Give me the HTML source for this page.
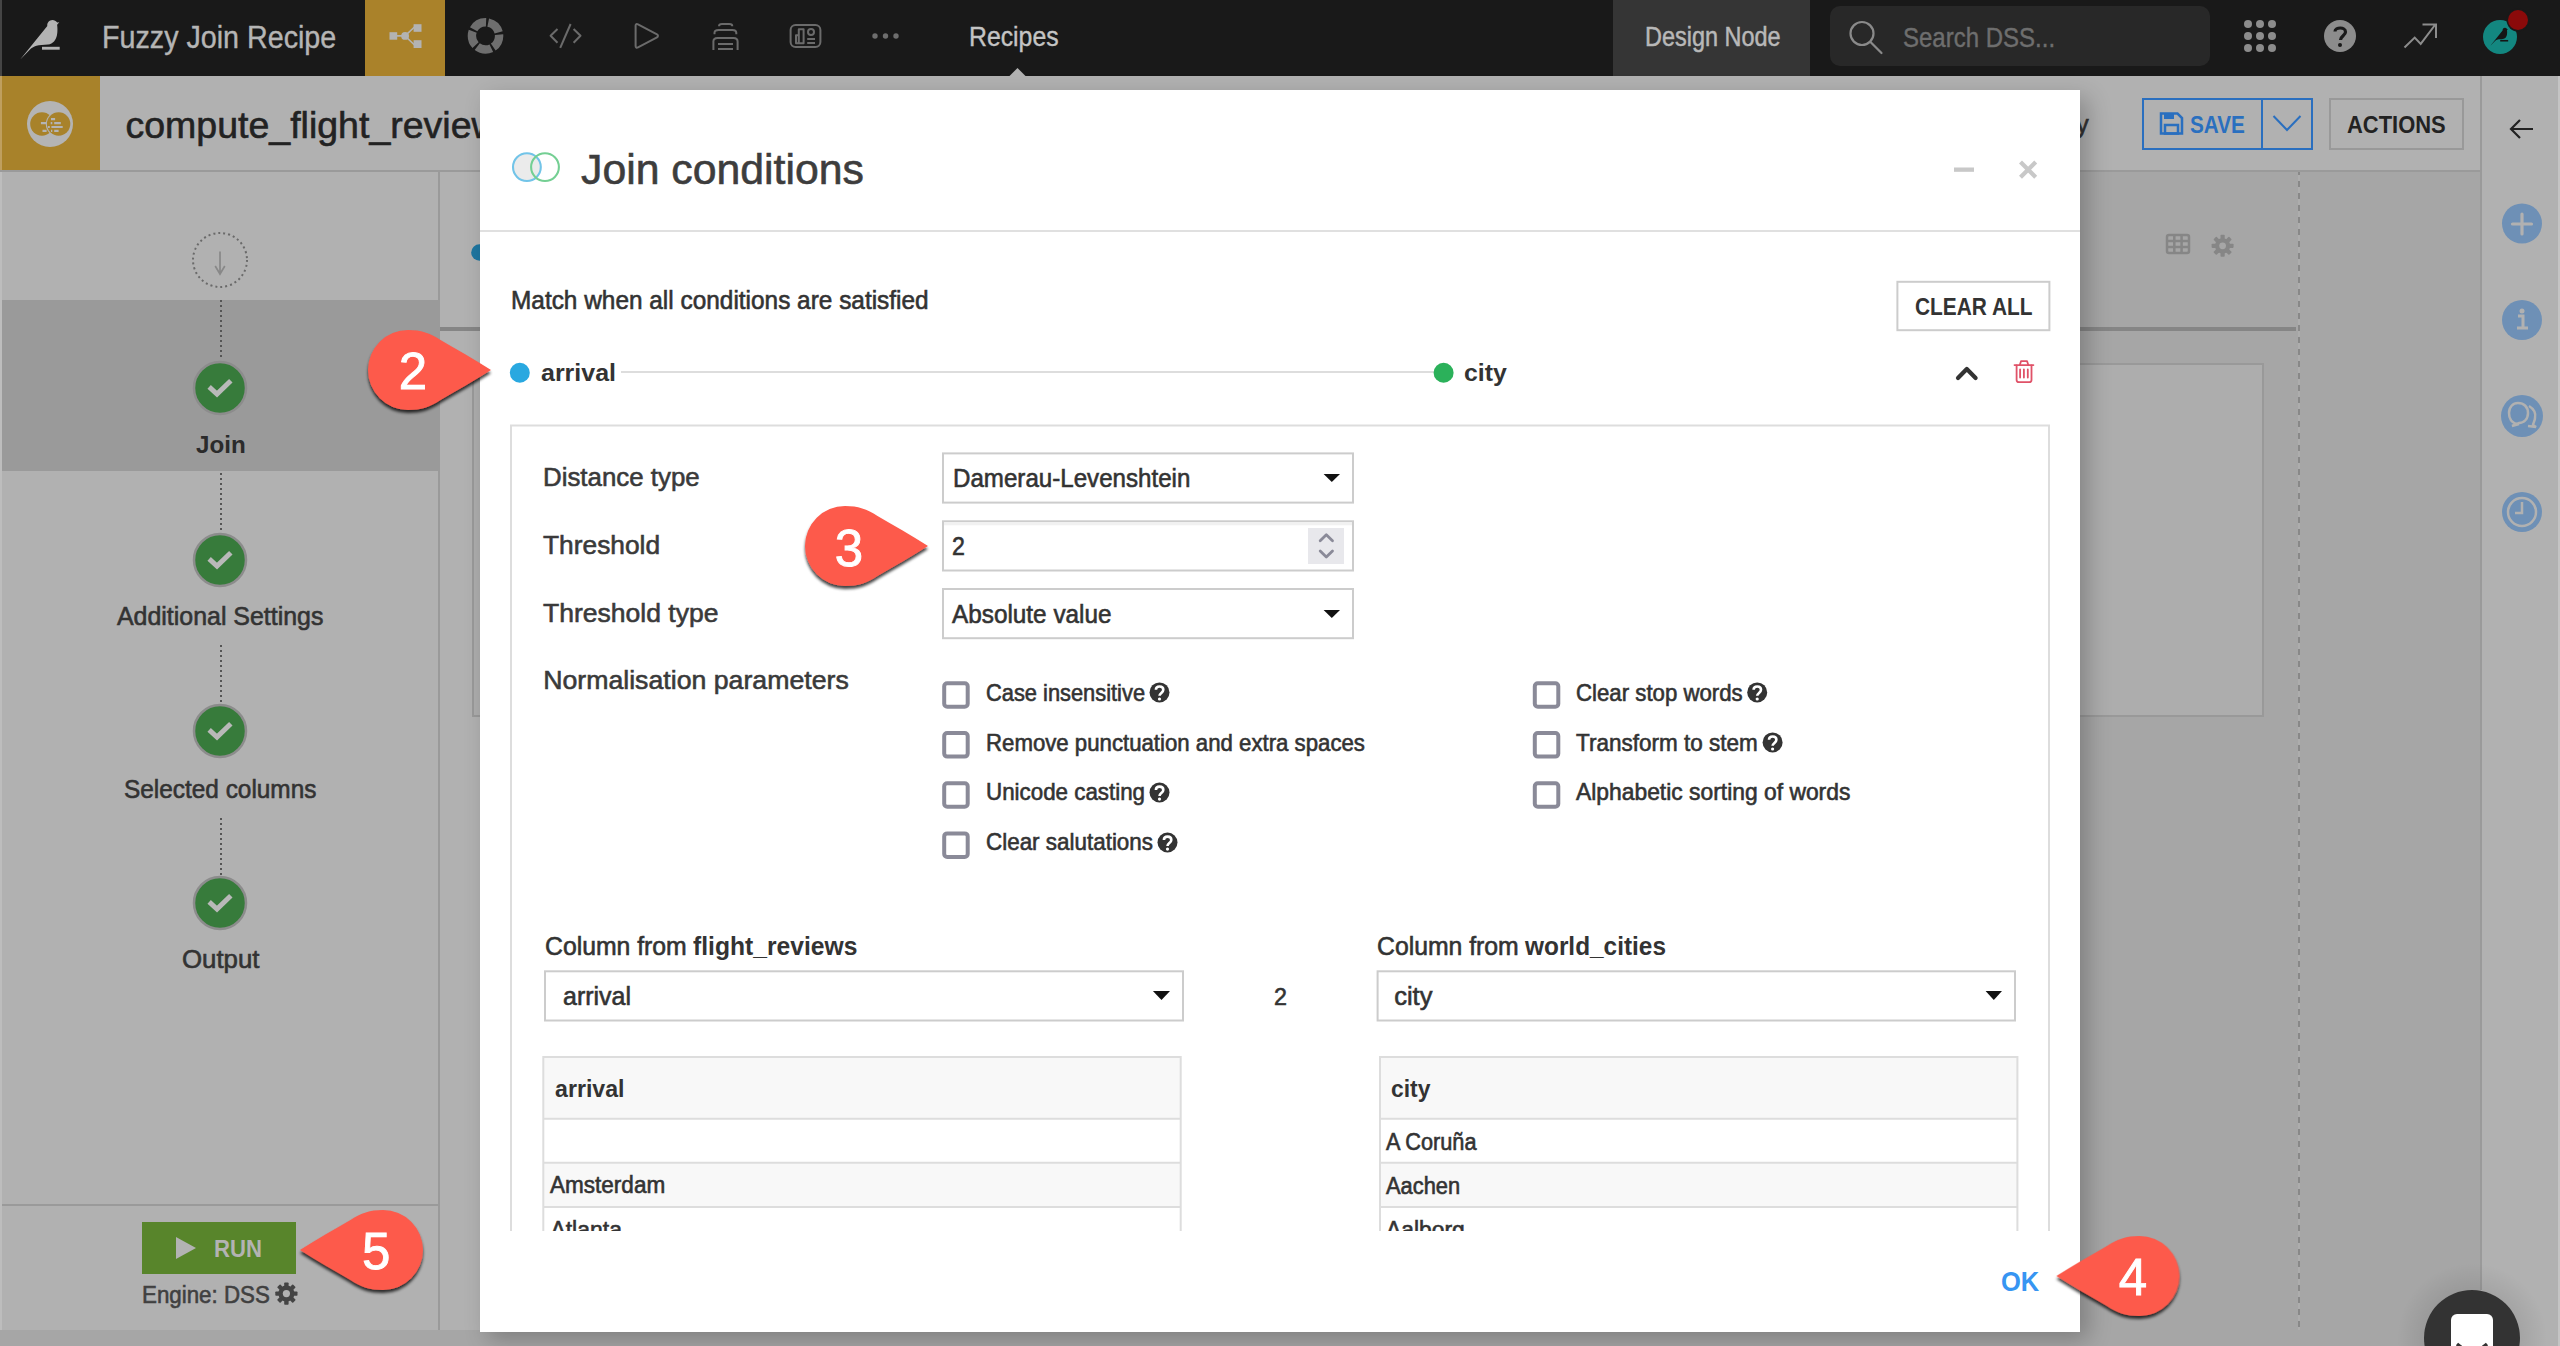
<!DOCTYPE html>
<html><head><meta charset="utf-8"><title>Join conditions</title>
<style>
html,body{margin:0;padding:0;}
body{width:2560px;height:1346px;overflow:hidden;position:relative;background:#a6a6a6;font-family:"Liberation Sans",sans-serif;}
.a{position:absolute;box-sizing:border-box;}
.tx{position:absolute;white-space:nowrap;line-height:1;transform-origin:0 0;font-family:"Liberation Sans",sans-serif;}
svg{position:absolute;overflow:visible;}
#nav{left:0;top:0;width:2560px;height:76px;background:#191919;}
.badge{position:absolute;}

</style></head><body>
<!-- ============ NAV ============ -->
<div id="nav" class="a"></div>
<div class="a" style="left:0;top:0;width:2px;height:76px;background:#454545"></div>
<svg style="left:0;top:0" width="2560" height="76">
  <!-- bird logo -->
  <path d="M20.2 59.6 L47.3 26 C46.8 22.8 49.4 19.9 52.4 19.9 C54.4 19.9 56 21 57.2 22.6 L59.3 22.3 L57.1 24.7 C57.6 28 57.6 31.5 57 35 C56 40 53 44 48 44.5 C44 45 39 45 36.5 45.8 C34.5 46.4 32.5 47.4 31 48.6 Z" fill="#b3b3b3"/>
  <rect x="42" y="46.8" width="17.7" height="2.9" fill="#b3b3b3"/>
  <!-- flow tab -->
  <rect x="365" y="0" width="80" height="76" fill="#aa822a"/>
  <g fill="#b3b3b3" stroke="#b3b3b3">
    <rect x="389.5" y="32.2" width="7.7" height="7.5" stroke="none"/>
    <rect x="413.6" y="24.2" width="7.9" height="7.6" stroke="none"/>
    <rect x="413.6" y="40.2" width="7.9" height="7.8" stroke="none"/>
    <circle cx="405.1" cy="35.9" r="3.9" stroke="none"/>
    <path d="M397 35.9 H405 L414.5 27 M405 35.9 L414.5 45" fill="none" stroke-width="1.6"/>
  </g>
  <!-- ring icon -->
  <g fill="none" stroke="#6e6e6e" stroke-width="7">
    <circle cx="485.5" cy="35.9" r="13.6" stroke-width="8.4" stroke-dasharray="14.9 2.19" stroke-dashoffset="1.9"/>
  </g>
  <!-- code -->
  <g fill="none" stroke="#6b6b6b" stroke-width="2" stroke-linejoin="round">
    <path d="M557.5 29 L550.6 35.8 L557.5 42.8"/>
    <path d="M573.6 29 L580.5 35.8 L573.6 42.8"/>
    <path d="M570.6 24 L560.2 47.8"/>
    <!-- play -->
    <path d="M635.6 25.5 C635.6 24 636.6 23.6 638 24.3 L657 34.3 C658.3 35 658.3 36.6 657 37.3 L638 47.3 C636.6 48 635.6 47.6 635.6 46.1 Z"/>
    <!-- stack -->
    <path d="M719 26.2 C719 24.8 720 24 722 24 H729.3 C731.3 24 732.3 24.8 732.3 26.2"/>
    <path d="M714.5 34.2 V32.8 C714.5 30.8 716 30 718.5 30 H732.5 C735 30 736.3 30.8 736.3 32.8 V34.2"/>
    <path d="M713.4 50 V41.6 C713.4 39 715 38.1 717.5 38.1 H733.5 C736 38.1 737.6 39 737.6 41.6 V50"/>
    <path d="M718 44 H733 M718 49 H733"/>
    <!-- dashboard -->
    <rect x="790.6" y="24.9" width="29.8" height="22" rx="5"/>
    <path d="M796 43.2 V35.3 H798.8 V43.2 Z M798.8 43.2 V29.2 H803.6 V43.2 Z M807.2 39 H815 M807.2 43 H815"/>
    <circle cx="811" cy="32" r="3"/>
  </g>
  <g fill="#6e6e6e">
    <circle cx="875" cy="36" r="2.7"/><circle cx="885.5" cy="36" r="2.7"/><circle cx="896" cy="36" r="2.7"/>
  </g>
  <!-- recipes pointer -->
  <path d="M1009.5 76 L1017.5 68 L1025.5 76 Z" fill="#b1b1b1"/>
  <!-- design node tab -->
  <rect x="1613" y="0" width="197" height="76" fill="#353535"/>
  <!-- search -->
  <rect x="1830" y="6" width="380" height="60" rx="10" fill="#282828"/>
  <g fill="none" stroke="#8a8a8a" stroke-width="2.2">
    <circle cx="1862" cy="33.5" r="11.5"/>
    <path d="M1870.5 42 L1881.5 53" stroke-linecap="round"/>
  </g>
  <!-- grid -->
  <g fill="#8c8c8c">
    <circle cx="2248" cy="24" r="4"/><circle cx="2260" cy="24" r="4"/><circle cx="2272" cy="24" r="4"/>
    <circle cx="2248" cy="36" r="4"/><circle cx="2260" cy="36" r="4"/><circle cx="2272" cy="36" r="4"/>
    <circle cx="2248" cy="48" r="4"/><circle cx="2260" cy="48" r="4"/><circle cx="2272" cy="48" r="4"/>
  </g>
  <!-- help -->
  <circle cx="2340" cy="36" r="16" fill="#8c8c8c"/>
  <path d="M2335 31.5 C2335 27 2345.5 26.5 2345.5 32 C2345.5 35.5 2340.5 36 2340.5 40" fill="none" stroke="#191919" stroke-width="3.2"/>
  <circle cx="2340" cy="45" r="2" fill="#191919"/>
  <!-- trend -->
  <path d="M2404.5 47.5 L2414.7 37.6 L2420.7 43.9 L2435 25 M2422.5 24.5 H2436 V38" fill="none" stroke="#8c8c8c" stroke-width="2"/>
  <!-- avatar -->
  <circle cx="2500" cy="37" r="17" fill="#138780"/>
  <g transform="translate(2481.3 18.9) scale(0.45)" fill="#151515"><path d="M20.2 59.6 L47.3 26 C46.8 22.8 49.4 19.9 52.4 19.9 C54.4 19.9 56 21 57.2 22.6 L59.3 22.3 L57.1 24.7 C57.6 28 57.6 31.5 57 35 C56 40 53 44 48 44.5 C44 45 39 45 36.5 45.8 C34.5 46.4 32.5 47.4 31 48.6 Z"/><rect x="42" y="46.8" width="17.7" height="3.5"/></g>
  <circle cx="2518" cy="20" r="11.5" fill="#191919"/>
  <circle cx="2518" cy="20" r="10" fill="#8b0a0a"/>
</svg>
<div id="t_title" class="tx" style="left:102.0px;top:22.2px;font-size:31px;font-weight:400;color:#b5b5b5;transform:scaleX(0.9248);-webkit-text-stroke:0.4px #b5b5b5;">Fuzzy Join Recipe</div>
<div id="t_recipes" class="tx" style="left:969.0px;top:23.4px;font-size:28px;font-weight:400;color:#c4c4c4;transform:scaleX(0.8858);-webkit-text-stroke:0.4px #c4c4c4;">Recipes</div>
<div id="t_design" class="tx" style="left:1644.5px;top:22.7px;font-size:27.5px;font-weight:400;color:#b8b8b8;transform:scaleX(0.8529);-webkit-text-stroke:0.5px #b8b8b8;">Design Node</div>
<div id="t_search" class="tx" style="left:1903.0px;top:24.2px;font-size:27.5px;font-weight:400;color:#6e6e6e;transform:scaleX(0.8729);-webkit-text-stroke:0.4px #6e6e6e;">Search DSS...</div>

<!-- ============ PAGE BACKGROUND (dimmed) ============ -->
<!-- subheader -->
<div class="a" style="left:0;top:76px;width:2560px;height:95px;background:#b1b1b1"></div>
<div class="a" style="left:0;top:76px;width:100px;height:94px;background:#a8822a"></div>
<svg style="left:0;top:76px" width="100" height="94">
  <circle cx="50" cy="48" r="23" fill="#b4b4b4"/>
  <circle cx="41.9" cy="48" r="11.7" fill="#a8822a"/>
  <circle cx="58.6" cy="48" r="12.8" fill="#b4b4b4"/>
  <circle cx="58.6" cy="48" r="11.7" fill="#a8822a"/>
  <g stroke="#b4b4b4" stroke-width="2.2">
    <path d="M51 43.1 H55.1 M40.9 47.2 H46.6 M50.7 47.2 H52.3 M54.2 47.2 H60.8 M47.9 51 H49.8 M51.4 51 H62.7 M42.5 54.8 H46.6 M51 54.8 H52.3 M54.2 54.8 H58.6"/>
  </g>
</svg>
<div class="a" style="left:0;top:170px;width:2481px;height:2px;background:#9a9a9a"></div>
<div class="a" style="left:0;top:76px;width:2px;height:94px;background:#bf9f5e"></div>
<div id="t_compute" class="tx" style="left:125.5px;top:106.5px;font-size:37.5px;font-weight:400;color:#222222;-webkit-text-stroke:0.6px #222222;">compute_flight_review</div>
<div id="t_y" class="tx" style="left:2076.0px;top:111.5px;font-size:25.5px;font-weight:400;color:#333;-webkit-text-stroke:0.6px #333;">y</div>
<!-- save / actions -->
<div class="a" style="left:2142px;top:98px;width:171px;height:52px;border:2px solid #2a6fbf"></div>
<div class="a" style="left:2261px;top:98px;width:2px;height:52px;background:#2a6fbf"></div>
<svg style="left:2150px;top:105px" width="40" height="40">
  <g fill="none" stroke="#2a6fbf" stroke-width="2.5">
    <path d="M11 8.5 H27.5 L32 13 V28.5 H11 Z"/>
    <rect x="15" y="20" width="13" height="8.5"/>
  </g>
  <rect x="14" y="8" width="10" height="6" fill="#2a6fbf"/>
</svg>
<svg style="left:2270px;top:110px" width="40" height="30">
  <path d="M3.5 6 L17 20 L30.5 6" fill="none" stroke="#2a6fbf" stroke-width="2"/>
</svg>
<div id="t_save" class="tx" style="left:2190.0px;top:112.5px;font-size:24.3px;font-weight:700;color:#2a6fbf;transform:scaleX(0.8539);">SAVE</div>
<div class="a" style="left:2329px;top:98px;width:135px;height:52px;border:2px solid #999"></div>
<div id="t_actions" class="tx" style="left:2347.0px;top:112.5px;font-size:24.3px;font-weight:700;color:#222222;transform:scaleX(0.9024);">ACTIONS</div>
<!-- sidebar -->
<div class="a" style="left:2481px;top:76px;width:79px;height:1270px;background:#b1b1b1"></div>
<div class="a" style="left:2480px;top:76px;width:2px;height:1214px;background:#9a9a9a"></div>
<div class="a" style="left:2558px;top:76px;width:2px;height:1270px;background:#c4c4c4"></div>
<svg style="left:2481px;top:76px" width="79" height="1270">
  <path d="M52 53 H30 M39 44 L30 53 L39 62" fill="none" stroke="#222" stroke-width="2.2"/>
  <g fill="#6e90b6">
    <circle cx="41" cy="147.5" r="20"/>
    <circle cx="41" cy="244" r="20"/>
    <circle cx="41" cy="340" r="21"/>
    <circle cx="41" cy="436" r="20"/>
  </g>
  <path d="M41 138 V158 M31.5 148 H50.5" stroke="#b1b1b1" stroke-width="3.2" stroke-linecap="round"/>
  <circle cx="41" cy="235" r="2.5" fill="#b1b1b1"/>
  <path d="M37 240 H42 V252 M36 252 H47" fill="none" stroke="#b1b1b1" stroke-width="3"/>
  <g fill="none" stroke="#b1b1b1" stroke-width="2.5">
    <path d="M38 348 C30 348 28 342 28 337 C28 331 32 327 37 327 C43 327 47 331 47 337 C47 343 43 347 38 347 L31 350 Z"/>
    <path d="M48 330 C53 333 55 337 54 342 C54 345 52 347 52 349 L55 351 L47 350"/>
    <circle cx="41" cy="436" r="14"/>
    <path d="M41 426 V437 H34"/>
  </g>
</svg>

<!-- left panel -->
<div class="a" style="left:0;top:172px;width:438px;height:1158px;background:#b1b1b1"></div>
<div class="a" style="left:0;top:300px;width:438px;height:171px;background:#9a9a9a"></div>
<div class="a" style="left:438px;top:172px;width:2px;height:1158px;background:#9a9a9a"></div>
<div class="a" style="left:0;top:1204px;width:438px;height:2px;background:#9a9a9a"></div>
<div class="a" style="left:0;top:172px;width:2px;height:1158px;background:#bdbdbd"></div>
<svg style="left:0;top:171px" width="440" height="1160">
  <circle cx="220" cy="89" r="27" fill="none" stroke="#6a6a6a" stroke-width="2" stroke-dasharray="2 3"/>
  <path d="M220 80.5 V103 M215.2 95 L220 103 L224.8 95" fill="none" stroke="#888" stroke-width="1.7"/>
  <g stroke="#555" stroke-width="2" stroke-dasharray="2 3">
    <path d="M221 129 V188"/>
    <path d="M221 302 V360"/>
    <path d="M221 474 V532"/>
    <path d="M221 647 V705"/>
  </g>
  <g fill="#377b3b" stroke="#8c8c8c" stroke-width="2.5">
    <circle cx="220" cy="217" r="26"/>
    <circle cx="220" cy="389" r="26"/>
    <circle cx="220" cy="560" r="26"/>
    <circle cx="220" cy="732" r="26"/>
  </g>
  <g fill="none" stroke="#b9b9b9" stroke-width="5" stroke-linecap="square">
    <path d="M211 217.5 L217 223 L229 211.5"/>
    <path d="M211 389.5 L217 395 L229 383.5"/>
    <path d="M211 560.5 L217 566 L229 554.5"/>
    <path d="M211 732.5 L217 738 L229 726.5"/>
  </g>
  <!-- run -->
  <rect x="142" y="1051" width="154" height="52" fill="#58852b"/>
  <path d="M176 1066 V1088 L196 1077 Z" fill="#b3b3b3"/>
  <!-- gear -->
  <g transform="translate(286.4 1122.6)"><circle r="8" fill="#444"/><rect x="-2.2" y="-11.1" width="4.4" height="4.6" rx="0.8" fill="#444" transform="rotate(0)"/><rect x="-2.2" y="-11.1" width="4.4" height="4.6" rx="0.8" fill="#444" transform="rotate(45)"/><rect x="-2.2" y="-11.1" width="4.4" height="4.6" rx="0.8" fill="#444" transform="rotate(90)"/><rect x="-2.2" y="-11.1" width="4.4" height="4.6" rx="0.8" fill="#444" transform="rotate(135)"/><rect x="-2.2" y="-11.1" width="4.4" height="4.6" rx="0.8" fill="#444" transform="rotate(180)"/><rect x="-2.2" y="-11.1" width="4.4" height="4.6" rx="0.8" fill="#444" transform="rotate(225)"/><rect x="-2.2" y="-11.1" width="4.4" height="4.6" rx="0.8" fill="#444" transform="rotate(270)"/><rect x="-2.2" y="-11.1" width="4.4" height="4.6" rx="0.8" fill="#444" transform="rotate(315)"/><circle r="3.6" fill="#b1b1b1"/></g>
</svg>
<div id="t_join" class="tx" style="left:195.7px;top:432.7px;font-size:24.5px;font-weight:700;color:#2b2b2b;transform:scaleX(0.9862);">Join</div>
<div id="t_addl" class="tx" style="left:117.0px;top:603.8px;font-size:25.3px;font-weight:400;color:#333333;transform:scaleX(0.9850);-webkit-text-stroke:0.6px #333333;">Additional Settings</div>
<div id="t_selcol" class="tx" style="left:124.0px;top:776.5px;font-size:25.3px;font-weight:400;color:#333333;transform:scaleX(0.9636);-webkit-text-stroke:0.6px #333333;">Selected columns</div>
<div id="t_output" class="tx" style="left:182.0px;top:947.1px;font-size:25.3px;font-weight:400;color:#333333;transform:scaleX(1.0205);-webkit-text-stroke:0.6px #333333;">Output</div>
<div id="t_run" class="tx" style="left:213.9px;top:1237.0px;font-size:24px;font-weight:700;color:#b3b3b3;transform:scaleX(0.9242);">RUN</div>
<div id="t_engine" class="tx" style="left:142.2px;top:1282.5px;font-size:24.7px;font-weight:400;color:#404040;transform:scaleX(0.9047);-webkit-text-stroke:0.6px #404040;">Engine: DSS</div>

<!-- main bg -->
<div class="a" style="left:440px;top:172px;width:2040px;height:1158px;background:#a6a6a6"></div>
<div class="a" style="left:440px;top:172px;width:40px;height:1158px;background:#b1b1b1"></div>
<div class="a" style="left:440px;top:327px;width:1856px;height:4px;background:#858585"></div>
<div class="a" style="left:472px;top:363px;width:1792px;height:354px;border:2px solid #999;background:#adadad"></div>
<div class="a" style="left:2298px;top:172px;width:2px;height:1158px;background:repeating-linear-gradient(to bottom,#888 0 3px,#adadad 3px 9px,#888 9px 12px)"></div>
<svg style="left:2150px;top:220px" width="100" height="50">
  <g fill="none" stroke="#868686" stroke-width="2.5">
    <rect x="17" y="15" width="22" height="18" rx="2"/>
    <path d="M17 21 H39 M17 27 H39 M24.3 15 V33 M31.6 15 V33"/>
  </g>
  <g transform="translate(72.6 25.8)"><circle r="7.6" fill="#868686"/><rect x="-2.1" y="-11" width="4.2" height="4.9" rx="0.8" fill="#868686" transform="rotate(0)"/><rect x="-2.1" y="-11" width="4.2" height="4.9" rx="0.8" fill="#868686" transform="rotate(45)"/><rect x="-2.1" y="-11" width="4.2" height="4.9" rx="0.8" fill="#868686" transform="rotate(90)"/><rect x="-2.1" y="-11" width="4.2" height="4.9" rx="0.8" fill="#868686" transform="rotate(135)"/><rect x="-2.1" y="-11" width="4.2" height="4.9" rx="0.8" fill="#868686" transform="rotate(180)"/><rect x="-2.1" y="-11" width="4.2" height="4.9" rx="0.8" fill="#868686" transform="rotate(225)"/><rect x="-2.1" y="-11" width="4.2" height="4.9" rx="0.8" fill="#868686" transform="rotate(270)"/><rect x="-2.1" y="-11" width="4.2" height="4.9" rx="0.8" fill="#868686" transform="rotate(315)"/><circle r="3.4" fill="#a6a6a6"/></g>
</svg>
<div class="a" style="left:0;top:1330px;width:2481px;height:16px;background:#a6a6a6"></div>
<svg style="left:460px;top:235px" width="30" height="30"><circle cx="19.5" cy="17.5" r="8.3" fill="#1e76a0"/></svg>
<!-- floating chat button -->
<svg style="left:2400px;top:1260px" width="160" height="86">
  <defs><radialGradient id="fsh"><stop offset="0.6" stop-color="#000" stop-opacity="0.08"/><stop offset="1" stop-color="#000" stop-opacity="0"/></radialGradient></defs>
  <circle cx="72" cy="78" r="75" fill="url(#fsh)"/>
  <circle cx="72" cy="78" r="48" fill="#333"/>
  <rect x="51" y="54" width="42" height="40" rx="6" fill="#fff"/>
  <path d="M57 84 L72 96 L87 84" fill="none" stroke="#333" stroke-width="3.5"/>
</svg>

<!-- ============ MODAL ============ -->
<div class="a" style="left:480px;top:90px;width:1600px;height:1242px;background:#fff;box-shadow:8px 8px 22px rgba(0,0,0,0.24)"></div>
<svg style="left:480px;top:90px" width="1600" height="1242">
  <!-- header icon -->
  <circle cx="46.9" cy="77.1" r="13.9" fill="#ebebeb" stroke="#72c4e8" stroke-width="2.1"/>
  <circle cx="65" cy="77.1" r="13.9" fill="none" stroke="#74cf93" stroke-width="2.1"/>
  <!-- min / close -->
  <rect x="1474" y="77.5" width="20" height="4.3" fill="#c8c8c8"/>
  <path d="M1540.5 72 L1555.7 87.2 M1555.7 72 L1540.5 87.2" stroke="#c8c8c8" stroke-width="4.2"/>
  <rect x="0" y="140" width="1600" height="2" fill="#e0e0e0"/>
  <!-- clear all -->
  <rect x="1417.4" y="191.8" width="152" height="48.4" fill="none" stroke="#cccccc" stroke-width="2"/>
  <!-- condition header -->
  <circle cx="39.8" cy="282.8" r="10" fill="#29a8e0"/>
  <rect x="141" y="281" width="813" height="2" fill="#dddddd"/>
  <circle cx="963.6" cy="282.8" r="10" fill="#2bb15a"/>
  <path d="M1478 288 L1486.8 279 L1495.6 288" fill="none" stroke="#333" stroke-width="4.2" stroke-linecap="round" stroke-linejoin="round"/>
  <g fill="none" stroke="#e05268" stroke-width="1.8" stroke-linejoin="round" stroke-linecap="round">
    <path d="M1534.5 275.1 H1553.4"/>
    <path d="M1539.8 275 L1541 271.2 H1547.1 L1548.3 275"/>
    <path d="M1536.6 275.5 V290 C1536.6 291.4 1537.6 292.2 1539 292.2 H1549.2 C1550.6 292.2 1551.5 291.4 1551.5 290 V275.5"/>
    <path d="M1540.1 279.4 V287.6 M1543.9 279.4 V287.6 M1547.8 279.4 V287.6"/>
  </g>
  <!-- inner box -->
  <path d="M31 1141 V335.5 H1569 V1141" fill="none" stroke="#dddddd" stroke-width="2"/>
  <!-- selects -->
  <rect x="463" y="363.4" width="410" height="49.2" fill="#fff" stroke="#cccccc" stroke-width="2"/>
  <path d="M843.6 384 H860 L851.8 392 Z" fill="#111"/>
  <rect x="463" y="431.3" width="410" height="49.2" fill="#fff" stroke="#cccccc" stroke-width="2"/>
  <rect x="464" y="432.3" width="408" height="3" fill="#f1f1f1"/>
  <rect x="828" y="438" width="36" height="36" fill="#e8e8ec"/>
  <path d="M840.2 450.8 L846.3 444.8 L852.5 450.8 M840.2 460.9 L846.3 467 L852.5 460.9" fill="none" stroke="#8a8a98" stroke-width="2.8" stroke-linecap="round" stroke-linejoin="round"/>
  <rect x="463" y="499" width="410" height="49.2" fill="#fff" stroke="#cccccc" stroke-width="2"/>
  <path d="M843.6 520 H860 L851.8 528 Z" fill="#111"/>
  <!-- checkboxes -->
  <g fill="none" stroke="#8a8a98" stroke-width="4">
    <rect x="464.2" y="593.2" width="23.5" height="23.5" rx="3"/>
    <rect x="464.2" y="643.1" width="23.5" height="23.5" rx="3"/>
    <rect x="464.2" y="693.3" width="23.5" height="23.5" rx="3"/>
    <rect x="464.2" y="743.4" width="23.5" height="23.5" rx="3"/>
    <rect x="1054.8" y="593.2" width="23.5" height="23.5" rx="3"/>
    <rect x="1054.8" y="643.1" width="23.5" height="23.5" rx="3"/>
    <rect x="1054.8" y="693.3" width="23.5" height="23.5" rx="3"/>
  </g>
  <!-- help icons -->
  <g id="helps">
    <g transform="translate(679.5 602.4)"><circle r="10" fill="#333"/><path d="M-3.6 -2.6 C-3.6 -7 3.8 -7 3.8 -2.6 C3.8 0.4 0 0.6 0 3.4" fill="none" stroke="#fff" stroke-width="2.6"/><circle cy="6.6" r="1.6" fill="#fff"/></g>
    <g transform="translate(679.5 702.5)"><circle r="10" fill="#333"/><path d="M-3.6 -2.6 C-3.6 -7 3.8 -7 3.8 -2.6 C3.8 0.4 0 0.6 0 3.4" fill="none" stroke="#fff" stroke-width="2.6"/><circle cy="6.6" r="1.6" fill="#fff"/></g>
    <g transform="translate(687.5 752.5)"><circle r="10" fill="#333"/><path d="M-3.6 -2.6 C-3.6 -7 3.8 -7 3.8 -2.6 C3.8 0.4 0 0.6 0 3.4" fill="none" stroke="#fff" stroke-width="2.6"/><circle cy="6.6" r="1.6" fill="#fff"/></g>
    <g transform="translate(1277.2 602.4)"><circle r="10" fill="#333"/><path d="M-3.6 -2.6 C-3.6 -7 3.8 -7 3.8 -2.6 C3.8 0.4 0 0.6 0 3.4" fill="none" stroke="#fff" stroke-width="2.6"/><circle cy="6.6" r="1.6" fill="#fff"/></g>
    <g transform="translate(1292.6 652.4)"><circle r="10" fill="#333"/><path d="M-3.6 -2.6 C-3.6 -7 3.8 -7 3.8 -2.6 C3.8 0.4 0 0.6 0 3.4" fill="none" stroke="#fff" stroke-width="2.6"/><circle cy="6.6" r="1.6" fill="#fff"/></g>
  </g>
  <!-- column selects -->
  <rect x="65" y="881.3" width="638" height="49.2" fill="#fff" stroke="#cccccc" stroke-width="2"/>
  <path d="M672.9 901 H690 L681.5 910 Z" fill="#111"/>
  <rect x="897.6" y="881.3" width="637.4" height="49.2" fill="#fff" stroke="#cccccc" stroke-width="2"/>
  <path d="M1505.6 901 H1522 L1513.8 910 Z" fill="#111"/>
  <!-- tables -->
  <g id="tables">
    <rect x="63.3" y="967" width="637.4" height="61.7" fill="#f8f8f8"/>
    <rect x="63.3" y="1072.8" width="637.4" height="44.2" fill="#f8f8f8"/>
    <path d="M63.3 1141.4 V967 H700.7 V1141.4" fill="none" stroke="#dddddd" stroke-width="2"/>
    <path d="M63.3 1028.7 H700.7 M63.3 1072.8 H700.7 M63.3 1117 H700.7" stroke="#dddddd" stroke-width="2"/>
    <rect x="900" y="967" width="637.4" height="61.7" fill="#f8f8f8"/>
    <rect x="900" y="1072.8" width="637.4" height="44.2" fill="#f8f8f8"/>
    <path d="M900 1141.4 V967 H1537.4 V1141.4" fill="none" stroke="#dddddd" stroke-width="2"/>
    <path d="M900 1028.7 H1537.4 M900 1072.8 H1537.4 M900 1117 H1537.4" stroke="#dddddd" stroke-width="2"/>
  </g>
</svg>
<div id="t_jc" class="tx" style="left:581.0px;top:148.7px;font-size:42px;font-weight:400;color:#3d3d3d;transform:scaleX(1.0185);-webkit-text-stroke:0.6px #3d3d3d;">Join conditions</div>
<div id="t_match" class="tx" style="left:511.0px;top:288.3px;font-size:25.3px;font-weight:400;color:#333333;transform:scaleX(0.9643);-webkit-text-stroke:0.6px #333333;">Match when all conditions are satisfied</div>
<div id="t_clear" class="tx" style="left:1915.0px;top:295.1px;font-size:24.3px;font-weight:700;color:#333333;transform:scaleX(0.8589);">CLEAR ALL</div>
<div id="t_arrival" class="tx" style="left:541.0px;top:361.0px;font-size:24px;font-weight:700;color:#333333;transform:scaleX(1.0402);">arrival</div>
<div id="t_city" class="tx" style="left:1464.4px;top:361.0px;font-size:24px;font-weight:700;color:#333333;transform:scaleX(1.0363);">city</div>
<div id="t_dist" class="tx" style="left:543.0px;top:463.9px;font-size:26.7px;font-weight:400;color:#3a3a3a;transform:scaleX(0.9689);-webkit-text-stroke:0.6px #3a3a3a;">Distance type</div>
<div id="t_thr" class="tx" style="left:543.0px;top:531.8px;font-size:26.7px;font-weight:400;color:#3a3a3a;transform:scaleX(0.9864);-webkit-text-stroke:0.6px #3a3a3a;">Threshold</div>
<div id="t_thrt" class="tx" style="left:543.0px;top:599.5px;font-size:26.7px;font-weight:400;color:#3a3a3a;transform:scaleX(0.9940);-webkit-text-stroke:0.6px #3a3a3a;">Threshold type</div>
<div id="t_norm" class="tx" style="left:543.2px;top:667.4px;font-size:26.7px;font-weight:400;color:#3a3a3a;-webkit-text-stroke:0.6px #3a3a3a;">Normalisation parameters</div>
<div id="t_dl" class="tx" style="left:953.2px;top:465.2px;font-size:26px;font-weight:400;color:#333333;transform:scaleX(0.9278);-webkit-text-stroke:0.6px #333333;">Damerau-Levenshtein</div>
<div id="t_two" class="tx" style="left:952.2px;top:534.1px;font-size:25px;font-weight:400;color:#333333;transform:scaleX(0.9276);-webkit-text-stroke:0.6px #333333;">2</div>
<div id="t_abs" class="tx" style="left:952.0px;top:601.0px;font-size:26px;font-weight:400;color:#333333;transform:scaleX(0.9354);-webkit-text-stroke:0.6px #333333;">Absolute value</div>
<div id="t_cb1" class="tx" style="left:985.7px;top:681.6px;font-size:23.2px;font-weight:400;color:#333333;transform:scaleX(0.9419);-webkit-text-stroke:0.6px #333333;">Case insensitive</div>
<div id="t_cb2" class="tx" style="left:985.7px;top:731.8px;font-size:23.2px;font-weight:400;color:#333333;transform:scaleX(0.9576);-webkit-text-stroke:0.6px #333333;">Remove punctuation and extra spaces</div>
<div id="t_cb3" class="tx" style="left:985.7px;top:781.4px;font-size:23.2px;font-weight:400;color:#333333;transform:scaleX(0.9638);-webkit-text-stroke:0.6px #333333;">Unicode casting</div>
<div id="t_cb4" class="tx" style="left:985.7px;top:831.4px;font-size:23.2px;font-weight:400;color:#333333;transform:scaleX(0.9671);-webkit-text-stroke:0.6px #333333;">Clear salutations</div>
<div id="t_cb5" class="tx" style="left:1576.0px;top:681.6px;font-size:23.2px;font-weight:400;color:#333333;transform:scaleX(0.9583);-webkit-text-stroke:0.6px #333333;">Clear stop words</div>
<div id="t_cb6" class="tx" style="left:1576.0px;top:731.8px;font-size:23.2px;font-weight:400;color:#333333;transform:scaleX(0.9699);-webkit-text-stroke:0.6px #333333;">Transform to stem</div>
<div id="t_cb7" class="tx" style="left:1576.0px;top:781.4px;font-size:23.2px;font-weight:400;color:#333333;transform:scaleX(0.9854);-webkit-text-stroke:0.6px #333333;">Alphabetic sorting of words</div>
<div id="t_colf1" class="tx" style="left:544.7px;top:934.1px;font-size:25.4px;font-weight:400;color:#333333;transform:scaleX(0.9751);-webkit-text-stroke:0.6px #333333;">Column from</div>
<div id="t_colf1b" class="tx" style="left:692.6px;top:934.1px;font-size:25.4px;font-weight:700;color:#333333;transform:scaleX(0.9709);">flight_reviews</div>
<div id="t_colf2" class="tx" style="left:1376.6px;top:933.8px;font-size:25.4px;font-weight:400;color:#333333;transform:scaleX(0.9751);-webkit-text-stroke:0.6px #333333;">Column from</div>
<div id="t_colf2b" class="tx" style="left:1525.0px;top:933.8px;font-size:25.4px;font-weight:700;color:#333333;transform:scaleX(0.9608);">world_cities</div>
<div id="t_sel1" class="tx" style="left:563.0px;top:983.9px;font-size:25.5px;font-weight:400;color:#333333;transform:scaleX(0.9796);-webkit-text-stroke:0.6px #333333;">arrival</div>
<div id="t_sel2" class="tx" style="left:1394.2px;top:984.4px;font-size:25.5px;font-weight:400;color:#333333;-webkit-text-stroke:0.6px #333333;">city</div>
<div id="t_mid2" class="tx" style="left:1273.6px;top:984.8px;font-size:24.5px;font-weight:400;color:#333333;transform:scaleX(0.9516);-webkit-text-stroke:0.6px #333333;">2</div>
<div id="t_th1" class="tx" style="left:554.7px;top:1077.2px;font-size:24px;font-weight:700;color:#333333;transform:scaleX(0.9653);">arrival</div>
<div id="t_th2" class="tx" style="left:1390.7px;top:1076.6px;font-size:24px;font-weight:700;color:#333333;transform:scaleX(0.9541);">city</div>
<div id="t_r_am" class="tx" style="left:550.4px;top:1174.3px;font-size:23px;font-weight:400;color:#333333;transform:scaleX(0.9798);-webkit-text-stroke:0.6px #333333;">Amsterdam</div>
<div id="t_r_ac" class="tx" style="left:1386.4px;top:1130.8px;font-size:23px;font-weight:400;color:#333333;transform:scaleX(0.9438);-webkit-text-stroke:0.6px #333333;">A Coruña</div>
<div id="t_r_aa" class="tx" style="left:1386.4px;top:1174.8px;font-size:23px;font-weight:400;color:#333333;transform:scaleX(0.9501);-webkit-text-stroke:0.6px #333333;">Aachen</div>
<div id="t_r_at" class="tx" style="left:550.4px;top:1218.5px;font-size:23px;font-weight:400;color:#333333;-webkit-text-stroke:0.6px #333333;">Atlanta</div>
<div id="t_r_al" class="tx" style="left:1386.4px;top:1218.8px;font-size:23px;font-weight:400;color:#333333;transform:scaleX(0.9929);-webkit-text-stroke:0.6px #333333;">Aalborg</div>
<div class="a" style="left:480px;top:1231px;width:1600px;height:30px;background:#fff"></div>
<div id="t_ok" class="tx" style="left:2000.6px;top:1267.0px;font-size:28.5px;font-weight:700;color:#3795f2;transform:scaleX(0.8945);">OK</div>

<!-- ============ BADGES ============ -->
<svg style="left:0;top:0" width="2560" height="1346">
  <defs>
    <filter id="bsh" x="-20%" y="-20%" width="140%" height="150%">
      <feGaussianBlur in="SourceAlpha" stdDeviation="1.6"/>
      <feOffset dx="0" dy="2.5" result="o"/>
      <feComponentTransfer><feFuncA type="linear" slope="0.75"/></feComponentTransfer>
      <feMerge><feMergeNode/><feMergeNode in="SourceGraphic"/></feMerge>
    </filter>
    <path id="bR" d="M0 -40 C13 -40 22 -37 32.5 -30 C48 -21 66 -11 83 0 C66 11 48 21 32.5 30 C22 37 13 40 0 40 A40 40 0 0 1 0 -40 Z"/>
  </defs>
  <g fill="#fd5a4b" filter="url(#bsh)">
    <use href="#bR" transform="translate(408 370)"/>
    <use href="#bR" transform="translate(845 546)"/>
    <use href="#bR" transform="translate(2139.5 1276) scale(-1 1)"/>
    <use href="#bR" transform="translate(383 1250) scale(-1 1)"/>
  </g>
  <g fill="#fff" stroke="#fff" stroke-width="0.9" font-family="Liberation Sans" font-size="51" text-anchor="middle">
    <text x="413" y="389">2</text>
    <text x="849" y="565.5">3</text>
    <text x="2133" y="1294.5">4</text>
    <text x="376.3" y="1269.4">5</text>
  </g>
</svg>

</body></html>
